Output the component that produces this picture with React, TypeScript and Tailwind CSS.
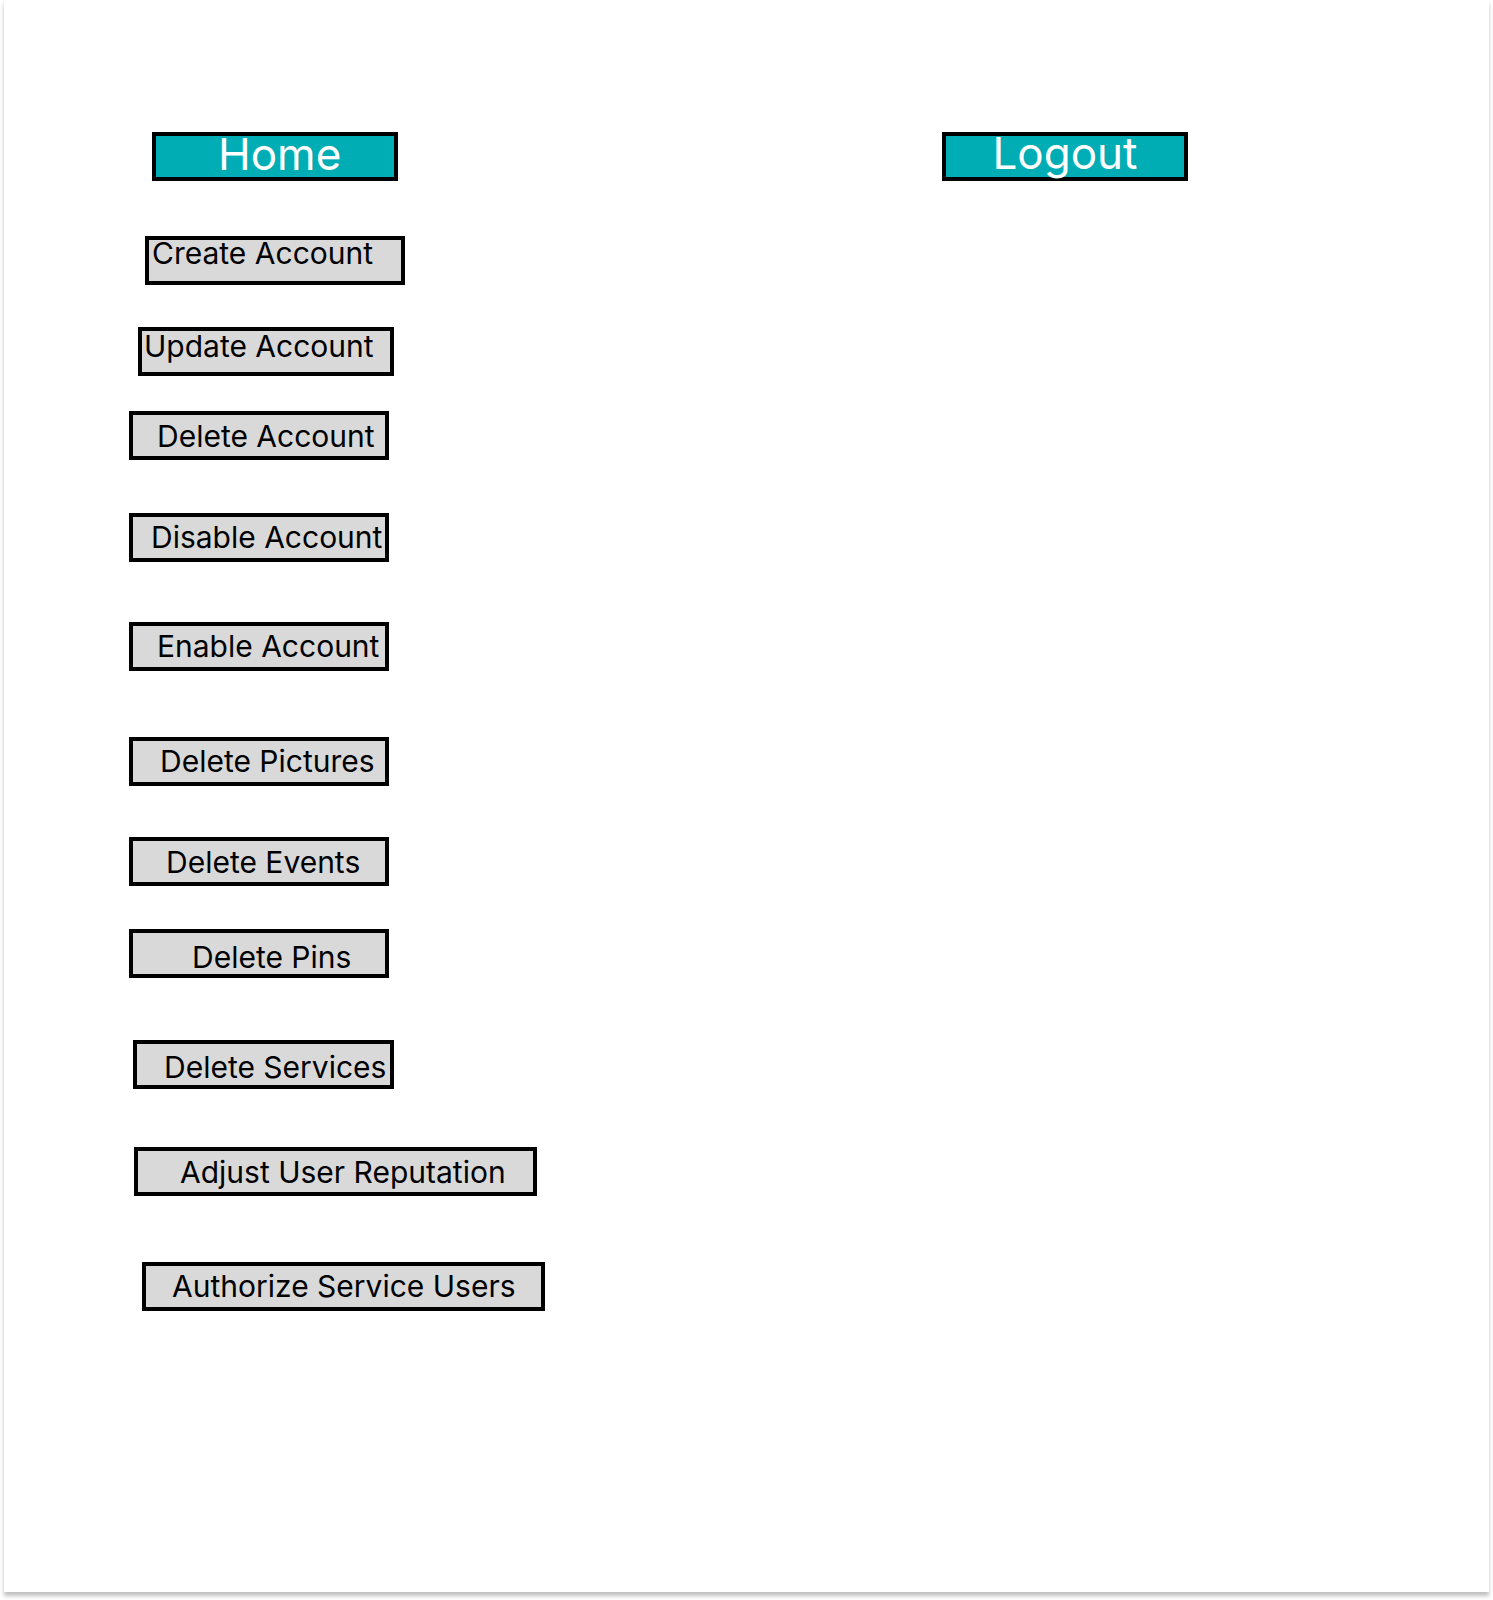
import React from "react";

type Item = { label: string; box: string; text: string };

const items: Item[] = [
  { label: "Create Account", box: "mt-[55px] ml-[141px] w-[260px]", text: "pl-[3px] -mt-[2px]" },
  { label: "Update Account", box: "mt-[42px] ml-[134px] w-[256px]", text: "pl-[2px] mt-[0px]" },
  { label: "Delete Account", box: "mt-[35px] ml-[125px] w-[260px]", text: "pl-[24px] mt-[6px]" },
  { label: "Disable Account", box: "mt-[53px] ml-[125px] w-[260px]", text: "pl-[18px] mt-[5px]" },
  { label: "Enable Account", box: "mt-[60px] ml-[125px] w-[260px]", text: "pl-[24px] mt-[5px]" },
  { label: "Delete Pictures", box: "mt-[66px] ml-[125px] w-[260px]", text: "pl-[27px] mt-[5px]" },
  { label: "Delete Events", box: "mt-[51px] ml-[125px] w-[260px]", text: "pl-[33px] mt-[6px]" },
  { label: "Delete Pins", box: "mt-[43px] ml-[125px] w-[260px]", text: "pl-[59px] mt-[9px]" },
  { label: "Delete Services", box: "mt-[62px] ml-[129px] w-[261px]", text: "pl-[27px] mt-[8px]" },
  { label: "Adjust User Reputation", box: "mt-[58px] ml-[130px] w-[403px]", text: "pl-[42px] mt-[6px]" },
  { label: "Authorize Service Users", box: "mt-[66px] ml-[138px] w-[403px]", text: "pl-[26px] mt-[5px]" },
];

export default function App() {
  return (
    <div
      className="w-[1493px] h-[1600px] bg-white pl-[4px]"
      style={{ fontFamily: "Inter, 'Noto Sans', sans-serif" }}
    >
      <div className="w-[1485px] h-[1592px] bg-white shadow-[0_4px_4px_rgba(0,0,0,0.25)] flex flex-col overflow-hidden">
        <div className="flex mt-[132px]">
          <button className="ml-[148px] w-[246px] h-[49px] border-4 border-black bg-[#00ADB5] text-white text-[44px] leading-none flex items-start pl-[62px]">
            <span className="-mt-[4px]">Home</span>
          </button>
          <button className="ml-[544px] w-[246px] h-[49px] border-4 border-black bg-[#00ADB5] text-white text-[44px] leading-none flex items-start justify-center">
            <span className="-mt-[5px]">Logout</span>
          </button>
        </div>
        {items.map((it) => (
          <div
            key={it.label}
            className={`${it.box} h-[49px] shrink-0 border-4 border-black bg-[#D9D9D9] text-black text-[30px] leading-none flex items-start whitespace-nowrap overflow-visible`}
          >
            <span className={it.text}>{it.label}</span>
          </div>
        ))}
      </div>
    </div>
  );
}
